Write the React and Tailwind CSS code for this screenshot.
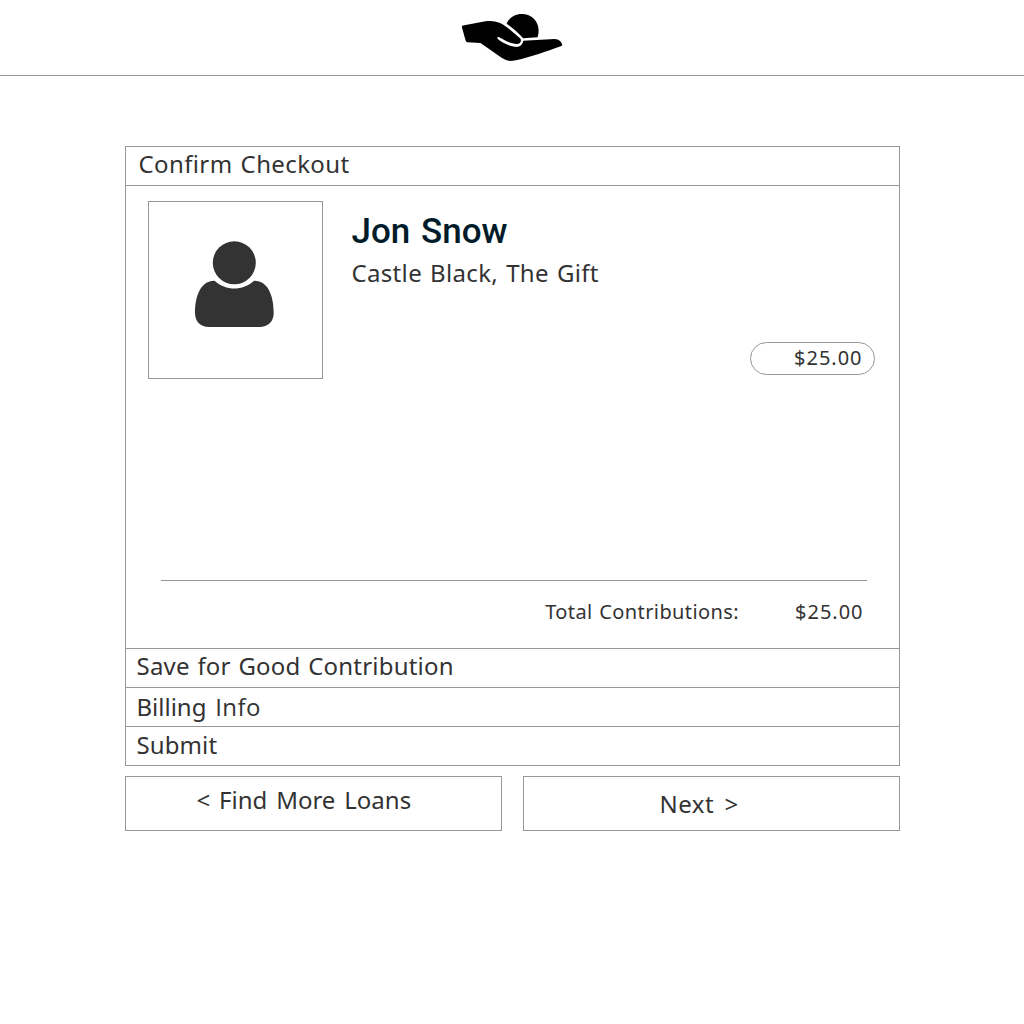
import React from "react";

function HandLogo() {
  return (
    <svg width="104" height="50" viewBox="460 12 104 50" fill="#000" aria-label="Logo">
      <path d="M506.6 23.7 C509.5 17 515.5 14 521.7 14 C531.8 14 538.6 21.5 538.6 30.2 C538.6 32.9 538.3 35.3 537.5 37.2 L523.2 38.3 C518.4 33.1 513.5 28.2 506.6 23.7 Z" />
      <path d="M463 25.6 L485.5 21.3 C497 19.8 503.5 24.2 509.5 29.3 L520 38.3 C522.2 40.4 520.3 44.3 516.8 44.1 C511.5 43.9 504.5 40.6 498.8 37.1 C497.4 36.3 496.8 37.9 497.8 39 C502 42.7 508.5 45.7 514.6 46.8 C519.7 47.6 522.5 44.8 523.3 40.8 L554.5 39.1 C559 39.1 561.3 41.9 562.2 44.6 C562.4 45.6 561.6 45.8 560 46.4 C547 51.2 531 56.9 514.5 60.5 C508.5 61.7 505.5 60.2 500.5 57 L480.5 43.1 L467.5 42.3 C466.3 42.1 465.9 41.2 465.5 40.2 L462 27.6 C461.7 26.5 461.9 25.9 463 25.6 Z" />
    </svg>
  );
}

function PersonIcon() {
  return (
    <svg width="80" height="88" viewBox="194 240 80 88" fill="#333" aria-hidden="true">
      <circle cx="234.3" cy="262.8" r="21.5" />
      <path d="M214.5 280.8 C226 291.2 242.6 291.2 254.1 280.8 C267.5 280.5 273.7 295 273.7 313 C273.7 321.5 268 327 259.5 327 L209 327 C200.5 327 195 321.5 195 313 C195 295 201.5 280.5 214.5 280.8 Z" />
    </svg>
  );
}

export default function App() {
  return (
    <div className="min-h-screen w-full bg-white font-['Noto_Sans',sans-serif] text-[24px] whitespace-nowrap text-[#333]">
      <header className="flex h-[76px] justify-center border-b border-[#979797] pt-3">
        <HandLogo />
      </header>
      <main className="mx-auto mt-[70px] w-[775px]">
        <section className="border border-[#979797]">
          <h2 className="h-[39px] border-b border-[#979797] pl-[13px] leading-[34px] tracking-[0.38px] [word-spacing:1.5px]">Confirm Checkout</h2>
          <div className="flex h-[463px] flex-col border-b border-[#979797]">
            <div className="flex pt-[15px] pl-[22px]">
              <div className="h-[178px] w-[175px] border border-[#979797] pt-[38px] pl-[45px]">
                <PersonIcon />
              </div>
              <div className="flex flex-1 flex-col pl-[29px]">
                <h1 className="mt-[10px] font-['Roboto',sans-serif] text-[35px] leading-[42px] font-medium text-[#001b29] [word-spacing:2px]">
                  Jon Snow
                </h1>
                <p className="-mt-px leading-[42px] tracking-[0.33px] [word-spacing:1.5px]">Castle Black, The Gift</p>
                <div className="mt-[48px] mr-[24px] flex h-[33px] w-[125px] justify-end self-end rounded-full border border-[#979797] pr-[11px] text-[20px] leading-[30px] tracking-[0.98px]">
                  <span>$25.00</span>
                </div>
              </div>
            </div>
            <div className="mt-auto mr-8 ml-[35px] flex h-[68px] justify-end border-t border-[#979797] pr-[3px] text-[20px] leading-[61px]">
              <span className="mr-[56px] tracking-[0.4px] [word-spacing:1px]">Total Contributions:</span>
              <span className="tracking-[0.98px]">$25.00</span>
            </div>
          </div>
          <h2 className="h-[39px] border-b border-[#979797] pl-[11px] leading-[34px] tracking-[0.2px] [word-spacing:1.3px]">Save for Good Contribution</h2>
          <h2 className="h-[39px] border-b border-[#979797] pl-[11px] leading-[38px] [word-spacing:2.5px]">
            Billing <span className="font-['Open_Sans',sans-serif] tracking-[0.45px]">Info</span>
          </h2>
          <h2 className="h-[38px] pl-[11px] leading-[36px] tracking-[0.1px]">Submit</h2>
        </section>
        <div className="mt-[10px] grid grid-cols-2 gap-[21px]">
          <button className="h-[55px] border border-[#979797] pb-[8px] pl-[71px] text-left [word-spacing:2.6px]">&lt; Find More Loans</button>
          <button className="h-[55px] border border-[#979797] pl-[136px] text-left tracking-[0.5px] [word-spacing:3.5px]">Next &gt;</button>
        </div>
      </main>
    </div>
  );
}
